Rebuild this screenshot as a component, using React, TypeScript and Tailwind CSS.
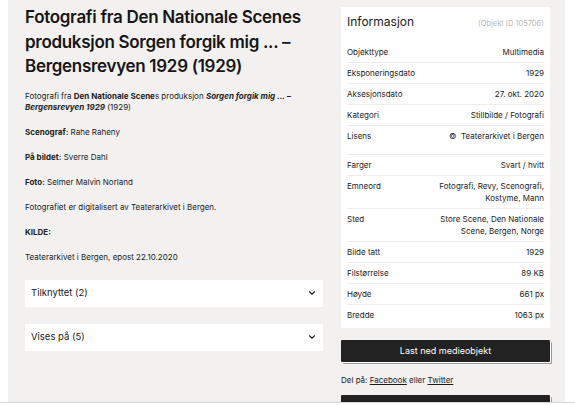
import { ChevronDown } from "lucide-react";

type Row = { label: string; value: string[]; extra?: boolean };

const rows: Row[] = [
  { label: "Objekttype", value: ["Multimedia"] },
  { label: "Eksponeringsdato", value: ["1929"] },
  { label: "Aksesjonsdato", value: ["27. okt. 2020"] },
  { label: "Kategori", value: ["Stillbilde / Fotografi"] },
  { label: "Lisens", value: ["©\u00a0\u00a0Teaterarkivet i Bergen"], extra: true },
  { label: "Farger", value: ["Svart / hvitt"] },
  { label: "Emneord", value: ["Fotografi, Revy, Scenografi,", "Kostyme, Mann"] },
  { label: "Sted", value: ["Store Scene, Den Nationale", "Scene, Bergen, Norge"] },
  { label: "Bilde tatt", value: ["1929"] },
  { label: "Filstørrelse", value: ["89 KB"] },
  { label: "Høyde", value: ["661 px"] },
  { label: "Bredde", value: ["1063 px"] },
];

const Accordion = ({ title }: { title: string }) => (
  <div className="flex items-center justify-between bg-white h-[27px] pl-[6px] pr-[6px] text-[9.5px] text-[#222]">
    <span>{title}</span>
    <ChevronDown className="w-[10px] h-[10px]" strokeWidth={2.75} />
  </div>
);

export default function App() {
  return (
    <div className="h-[405px] w-[575px] overflow-hidden bg-white pl-[8px] text-[#1c1c1c]" style={{ fontFamily: "Inter, 'Noto Sans', sans-serif" }}>
      <div className="flex h-[402px] w-[557px] bg-[#f2f1ef] overflow-hidden">
        {/* Left column */}
        <div className="w-[298px] ml-[17px] pt-[5px]">
          <h1 className="text-[17px] leading-[24.5px] font-semibold tracking-[-0.3px] text-[#161616]">
            Fotografi fra Den Nationale Scenes produksjon Sorgen forgik mig ... – Bergensrevyen 1929 (1929)
          </h1>
          <div className="mt-[12px] text-[8px] leading-[11px] text-[#222]">
            <p className="mb-[14px]">
              Fotografi fra <b>Den Nationale Scene</b>s produksjon <b><i>Sorgen forgik mig ... – Bergensrevyen 1929</i></b> (1929)
            </p>
            <p className="mb-[14px]"><b>Scenograf:</b> Rahe Raheny</p>
            <p className="mb-[14px]"><b>På bildet:</b> Sverre Dahl</p>
            <p className="mb-[14px]"><b>Foto:</b> Selmer Malvin Norland</p>
            <p className="mb-[14px]">Fotografiet er digitalisert av Teaterarkivet i Bergen.</p>
            <p className="mb-[14px]"><b>KILDE:</b></p>
            <p>Teaterarkivet i Bergen, epost 22.10.2020</p>
          </div>
          <div className="mt-[17px] flex flex-col gap-[17px]">
            <Accordion title="Tilknyttet (2)" />
            <Accordion title="Vises på (5)" />
          </div>
        </div>

        {/* Right column */}
        <div className="w-[209px] ml-[18px] pt-[7px]">
          <div className="bg-white px-[6px] pb-[3px]">
            <div className="flex items-baseline justify-between pt-[7px] pb-[11px]">
              <span className="text-[12px] leading-[16px]">Informasjon</span>
              <span className="text-[7.5px] text-[#b8b8b8]">(Objekt ID 105706)</span>
            </div>
            {rows.map((r, i) => (
              <div
                key={r.label}
                className={`flex justify-between text-[8px] leading-[12px] py-[4px] ${i > 0 ? "border-t border-[#eeeeee]" : "pt-[5px]"} ${r.extra ? "pb-[12px]" : ""}`}
              >
                <span>{r.label}</span>
                <span className="w-[110px] text-right">
                  {r.value.map((v) => (
                    <span key={v} className="block">{v}</span>
                  ))}
                </span>
              </div>
            ))}
          </div>
          <button className="mt-[12px] w-full h-[22px] bg-[#222] text-white text-[9px] rounded-[1px] shadow-[1px_1px_0_#fff,2px_2px_0_#9a9a9a]">
            Last ned medieobjekt
          </button>
          <div className="mt-[13px] text-[8px] leading-[11px]">
            Del på: <span className="underline">Facebook</span> eller <span className="underline">Twitter</span>
          </div>
          <button className="mt-[9px] w-full h-[22px] bg-[#222] text-white text-[9px] rounded-[1px] shadow-[1px_1px_0_#fff,2px_2px_0_#9a9a9a]">
            Rapportér feil eller mangler
          </button>
        </div>
      </div>
      <div className="h-[1px] bg-[#d6d6d6] -ml-[8px]" />
    </div>
  );
}
